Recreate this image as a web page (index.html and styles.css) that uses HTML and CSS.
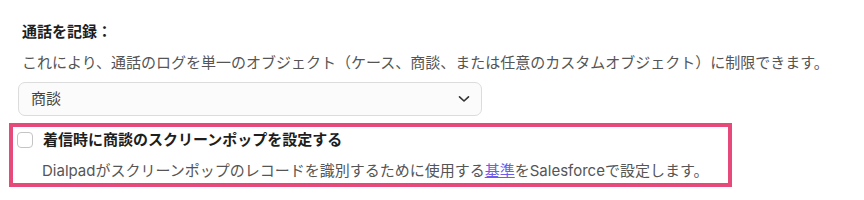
FILE: index.html
```html
<!DOCTYPE html>
<html lang="ja">

<head>
  <meta charset='utf-8'>
  <title>通話を記録</title>
  <link rel="stylesheet" href="styles.css">
</head>

<body>
  <div class='settings'>
    <div class='title'>通話を記録：</div>
    <p class='desc'>これにより、通話のログを単一のオブジェクト（ケース、商談、または任意のカスタムオブジェクト）に制限できます。</p>
    <div class='select'>
      <span>商談</span>
      <svg class='chevron' width='12' height='8' viewBox='0 0 12 8'>
        <path d='M1.5 1.8 L6 6 L10.5 1.8' fill='none' stroke='#333' stroke-width='1.6' stroke-linecap='round' stroke-linejoin='round' />
      </svg>
    </div>
    <div class='screenpop'>
      <label class='check'>
        <span class='box'></span>
        <span class='label'>着信時に商談のスクリーンポップを設定する</span>
      </label>
      <p class='hint'>Dialpadがスクリーンポップのレコードを識別するために使用する<a href='#'>基準</a>をSalesforceで設定します。</p>
    </div>
  </div>
</body>

</html>
```

FILE: styles.css
```css
* {
  margin: 0;
  padding: 0;
  box-sizing: border-box;
}

body {
  background: #fff;
  font-family: Inter, "Noto Sans CJK JP", sans-serif;
  font-size: 15px;
  line-height: 20px;
  color: #222;
}

.settings {
  padding: 22px 0 0 18px;
}

.title {
  margin-left: 4px;
  font-weight: bold;
  color: #1e1e1e;
}

.desc {
  margin: 11px 0 0 4px;
  color: #555;
}

.select {
  display: flex;
  align-items: center;
  justify-content: space-between;
  width: 464px;
  height: 34px;
  margin-top: 9px;
  padding: 0 11px 0 12px;
  border: 1px solid #dcdcdc;
  border-radius: 7px;
  background: #fbfbfb;
  color: #444;
}

.screenpop {
  width: 723px;
  margin: 7px 0 0 -9px;
  padding: 3px 0 2px 4px;
  border: 4px solid #e54a7a;
}

.check {
  display: flex;
  align-items: center;
  gap: 10px;
}

.box {
  width: 16px;
  height: 16px;
  border: 1px solid #c4c4c4;
  border-radius: 4px;
  background: #fff;
}

.label {
  font-weight: bold;
  color: #1e1e1e;
}

.hint {
  margin: 11px 0 0 25px;
  color: #555;
}

.hint a {
  color: #6c5ce7;
  text-decoration: underline;
}
```
